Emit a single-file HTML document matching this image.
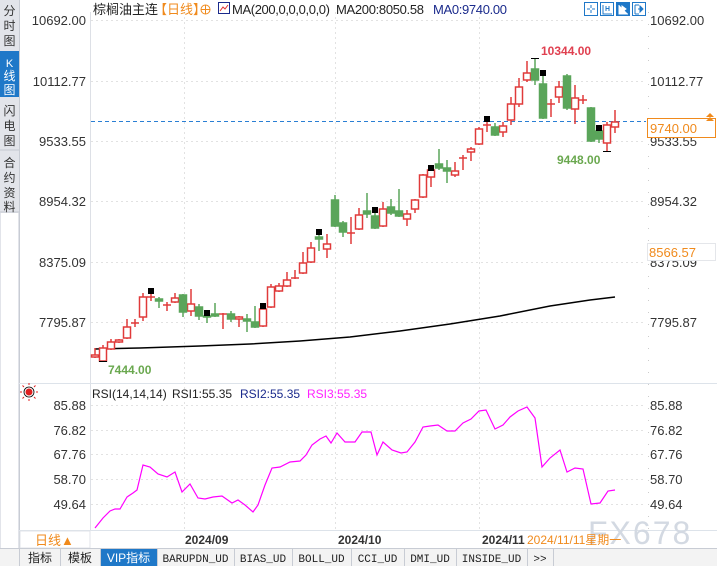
<!DOCTYPE html>
<html><head><meta charset="utf-8"><style>
html,body{margin:0;padding:0;background:#fff;}
body{width:717px;height:566px;position:relative;overflow:hidden;font-family:"Liberation Sans","Noto Sans CJK SC",sans-serif;}
svg{position:absolute;left:0;top:0;}
</style></head><body>
<svg width="717" height="566" viewBox="0 0 717 566" xmlns="http://www.w3.org/2000/svg" font-family="Liberation Sans, Noto Sans CJK SC, sans-serif">
<rect x="0" y="0" width="19" height="566" fill="#e2e4ea"/>
<rect x="19" y="0" width="1" height="548" fill="#c8ccd4"/>
<rect x="0" y="51" width="19" height="46" fill="#1f78c8"/>
<line x1="0" y1="150" x2="19" y2="150" stroke="#c4c8d0"/>
<line x1="0" y1="212" x2="19" y2="212" stroke="#c4c8d0"/>
<rect x="1" y="213" width="17" height="335" fill="#fff"/>
<g font-size="12" fill="#333" text-anchor="middle">
<text x="9.5" y="15">分</text><text x="9.5" y="30">时</text><text x="9.5" y="45">图</text>
<text x="9.5" y="67" fill="#fff" font-size="11">K</text><text x="9.5" y="80" fill="#fff">线</text><text x="9.5" y="94" fill="#fff">图</text>
<text x="9.5" y="115">闪</text><text x="9.5" y="130">电</text><text x="9.5" y="145">图</text>
<text x="9.5" y="167">合</text><text x="9.5" y="182">约</text><text x="9.5" y="197">资</text><text x="9.5" y="211">料</text>
</g>
<line x1="90.5" y1="12" x2="90.5" y2="530" stroke="#dde0e6"/>
<line x1="19" y1="383.5" x2="717" y2="383.5" stroke="#dde3ea"/>
<line x1="19" y1="530.5" x2="717" y2="530.5" stroke="#dde3ea"/>
<line x1="648.5" y1="12" x2="648.5" y2="530" stroke="#ccc" stroke-dasharray="1 11"/>
<g stroke="#e2e2e2" stroke-dasharray="2 3">
<line x1="91" y1="20.5" x2="646" y2="20.5"/><line x1="91" y1="81.5" x2="646" y2="81.5"/><line x1="91" y1="141.5" x2="646" y2="141.5"/><line x1="91" y1="201.5" x2="646" y2="201.5"/><line x1="91" y1="262.5" x2="646" y2="262.5"/><line x1="91" y1="322.5" x2="646" y2="322.5"/>
<line x1="91" y1="405.5" x2="646" y2="405.5"/><line x1="91" y1="430.5" x2="646" y2="430.5"/><line x1="91" y1="454.5" x2="646" y2="454.5"/><line x1="91" y1="479.5" x2="646" y2="479.5"/><line x1="91" y1="504.5" x2="646" y2="504.5"/>
<line x1="184.5" y1="12" x2="184.5" y2="530"/><line x1="335.5" y1="12" x2="335.5" y2="530"/><line x1="479.5" y1="12" x2="479.5" y2="530"/>
</g>
<g font-size="13" fill="#333" text-anchor="end">
<text x="86" y="25">10692.00</text><text x="86" y="86">10112.77</text><text x="86" y="146">9533.55</text><text x="86" y="206">8954.32</text><text x="86" y="267">8375.09</text><text x="86" y="327">7795.87</text>
<text x="86" y="410">85.88</text><text x="86" y="435">76.82</text><text x="86" y="459">67.76</text><text x="86" y="484">58.70</text><text x="86" y="509">49.64</text>
</g>
<g font-size="13" fill="#333">
<text x="650" y="25">10692.00</text><text x="650" y="86">10112.77</text><text x="650" y="146">9533.55</text><text x="650" y="206">8954.32</text><text x="650" y="267">8375.09</text><text x="650" y="327">7795.87</text>
<text x="650" y="410">85.88</text><text x="650" y="435">76.82</text><text x="650" y="459">67.76</text><text x="650" y="484">58.70</text><text x="650" y="509">49.64</text>
</g>
<g font-size="13">
<text x="93" y="14" fill="#222">棕榈油主连</text>
<text x="154" y="14" fill="#f08a1c">【日线】</text>
<circle cx="205.5" cy="9.5" r="4.5" fill="none" stroke="#f08a1c"/><line x1="201" y1="9.5" x2="210" y2="9.5" stroke="#f08a1c"/><line x1="205.5" y1="5" x2="205.5" y2="14" stroke="#f08a1c"/>
<rect x="218.5" y="2.5" width="11" height="11" fill="#fff" stroke="#1a2a8c"/><polyline points="220,11 223,7 225,9 228,5" fill="none" stroke="#e03030"/>
<text x="232" y="14" fill="#222" textLength="98">MA(200,0,0,0,0,0)</text>
<text x="336" y="14" fill="#222" textLength="88">MA200:8050.58</text>
<text x="433" y="14" fill="#1a2a8c" textLength="74">MA0:9740.00</text>
</g>
<g stroke="#1f78c8" fill="#fff">
<rect x="584.5" y="2.5" width="13" height="13"/><rect x="600.5" y="2.5" width="13" height="13"/><rect x="616.5" y="2.5" width="13" height="13" fill="#1f78c8"/><rect x="632.5" y="2.5" width="13" height="13"/>
<path d="M591 5v3M591 10v3M587 9h3M592 9h3" />
<path d="M603 5v9h9M606 6v5M609 6v5M606 8.5h3"/>
<path d="M619 5v9h9M622 6v6l4-3z" stroke="#fff" fill="#fff"/>
<path d="M635 5v9M635 5h4M635 14h4M638 9h3M640 6l3 3-3 3z" fill="#1f78c8"/>
</g>
<line x1="91" y1="121.5" x2="646" y2="121.5" stroke="#2a7fd4" stroke-dasharray="4 3"/>
<polyline points="95,349 140,348 200,346 250,344 300,341 350,337 400,331 450,324 500,316 550,306 590,300 615,297" fill="none" stroke="#000" stroke-width="1.5"/>
<g stroke-width="1.5">
<g stroke="#e03a3a" fill="#fff">
<line x1="95" y1="348" x2="95" y2="358"/><rect x="91.5" y="355" width="7" height="2"/>
<line x1="103" y1="345" x2="103" y2="361"/><rect x="99.5" y="348" width="7" height="13"/>
<line x1="111" y1="339" x2="111" y2="350"/><rect x="107.5" y="342" width="7" height="7"/>
<line x1="119" y1="339" x2="119" y2="343"/><rect x="115.5" y="340" width="7" height="2"/>
<line x1="127" y1="319" x2="127" y2="339"/><rect x="123.5" y="327" width="7" height="11"/>
<line x1="135" y1="319" x2="135" y2="327"/><line x1="131" y1="323" x2="139" y2="323"/>
<line x1="143" y1="293" x2="143" y2="321"/><rect x="139.5" y="297" width="7" height="20"/>
<line x1="151" y1="292" x2="151" y2="301"/><line x1="147" y1="297" x2="155" y2="297"/>
<line x1="167" y1="302" x2="167" y2="311"/><line x1="163" y1="305" x2="171" y2="305"/>
<line x1="175" y1="293" x2="175" y2="303"/><rect x="171.5" y="298" width="7" height="4"/>
<line x1="191" y1="289" x2="191" y2="316"/><rect x="187.5" y="304" width="7" height="7"/>
<line x1="223" y1="313" x2="223" y2="329"/><line x1="219" y1="314" x2="227" y2="314"/>
<line x1="239" y1="316" x2="239" y2="327"/><rect x="235.5" y="317" width="7" height="2"/>
<line x1="263" y1="305" x2="263" y2="327"/><rect x="259.5" y="309" width="7" height="17"/>
<line x1="271" y1="284" x2="271" y2="308"/><rect x="267.5" y="287" width="7" height="20"/>
<line x1="279" y1="283" x2="279" y2="292"/><rect x="275.5" y="286" width="7" height="5"/>
<line x1="287" y1="272" x2="287" y2="287"/><rect x="283.5" y="280" width="7" height="6"/>
<line x1="295" y1="270" x2="295" y2="279"/><line x1="291" y1="278" x2="299" y2="278"/>
<line x1="303" y1="252" x2="303" y2="274"/><rect x="299.5" y="263" width="7" height="10"/>
<line x1="311" y1="242" x2="311" y2="263"/><rect x="307.5" y="248" width="7" height="14"/>
<line x1="327" y1="234" x2="327" y2="258"/><rect x="323.5" y="244" width="7" height="5"/>
<line x1="351" y1="217" x2="351" y2="244"/><line x1="347" y1="233" x2="355" y2="233"/>
<line x1="359" y1="208" x2="359" y2="230"/><rect x="355.5" y="215" width="7" height="14"/>
<line x1="383" y1="202" x2="383" y2="227"/><rect x="379.5" y="209" width="7" height="17"/>
<line x1="407" y1="210" x2="407" y2="226"/><rect x="403.5" y="214" width="7" height="5"/>
<line x1="415" y1="199" x2="415" y2="213"/><rect x="411.5" y="200" width="7" height="9"/>
<line x1="423" y1="174" x2="423" y2="198"/><rect x="419.5" y="175" width="7" height="22"/>
<line x1="431" y1="169" x2="431" y2="187"/><rect x="427.5" y="170" width="7" height="7"/>
<line x1="455" y1="162" x2="455" y2="177"/><rect x="451.5" y="171" width="7" height="4"/>
<line x1="463" y1="155" x2="463" y2="170"/><line x1="459" y1="158" x2="467" y2="158"/>
<line x1="471" y1="147" x2="471" y2="161"/><rect x="467.5" y="149" width="7" height="3"/>
<line x1="479" y1="127" x2="479" y2="145"/><rect x="475.5" y="129" width="7" height="15"/>
<line x1="487" y1="118" x2="487" y2="132"/><line x1="483" y1="125" x2="491" y2="125"/>
<line x1="503" y1="122" x2="503" y2="137"/><rect x="499.5" y="126" width="7" height="6"/>
<line x1="511" y1="97" x2="511" y2="125"/><rect x="507.5" y="104" width="7" height="16"/>
<line x1="519" y1="78" x2="519" y2="107"/><rect x="515.5" y="87" width="7" height="17"/>
<line x1="527" y1="61" x2="527" y2="82"/><rect x="523.5" y="73" width="7" height="7"/>
<line x1="551" y1="99" x2="551" y2="117"/><line x1="547" y1="104" x2="555" y2="104"/>
<line x1="559" y1="81" x2="559" y2="103"/><rect x="555.5" y="87" width="7" height="10"/>
<line x1="575" y1="85" x2="575" y2="124"/><rect x="571.5" y="98" width="7" height="11"/>
<line x1="583" y1="95" x2="583" y2="104"/><line x1="579" y1="100" x2="587" y2="100"/>
<line x1="607" y1="122" x2="607" y2="151"/><rect x="603.5" y="125" width="7" height="18"/>
<line x1="615" y1="110" x2="615" y2="133"/><rect x="611.5" y="122" width="7" height="5"/>
</g>
<g stroke="#5aa55a" fill="#5aa55a">
<line x1="159" y1="297" x2="159" y2="308"/><rect x="155.5" y="299" width="7" height="2"/>
<line x1="183" y1="294" x2="183" y2="317"/><rect x="179.5" y="295" width="7" height="17"/>
<line x1="199" y1="304" x2="199" y2="320"/><rect x="195.5" y="307" width="7" height="9"/>
<line x1="207" y1="312" x2="207" y2="323"/><rect x="203.5" y="316" width="7" height="1"/>
<line x1="215" y1="303" x2="215" y2="317"/><rect x="211.5" y="314" width="7" height="2"/>
<line x1="231" y1="311" x2="231" y2="322"/><rect x="227.5" y="314" width="7" height="5"/>
<line x1="247" y1="314" x2="247" y2="332"/><rect x="243.5" y="319" width="7" height="2"/>
<line x1="255" y1="306" x2="255" y2="328"/><rect x="251.5" y="322" width="7" height="5"/>
<line x1="319" y1="233" x2="319" y2="251"/><rect x="315.5" y="237" width="7" height="2"/>
<line x1="335" y1="195" x2="335" y2="227"/><rect x="331.5" y="200" width="7" height="26"/>
<line x1="343" y1="221" x2="343" y2="237"/><rect x="339.5" y="223" width="7" height="9"/>
<line x1="367" y1="193" x2="367" y2="218"/><rect x="363.5" y="211" width="7" height="3"/>
<line x1="375" y1="212" x2="375" y2="229"/><rect x="371.5" y="216" width="7" height="12"/>
<line x1="391" y1="199" x2="391" y2="215"/><rect x="387.5" y="207" width="7" height="6"/>
<line x1="399" y1="189" x2="399" y2="217"/><rect x="395.5" y="211" width="7" height="5"/>
<line x1="439" y1="149" x2="439" y2="170"/><rect x="435.5" y="164" width="7" height="4"/>
<line x1="447" y1="160" x2="447" y2="183"/><rect x="443.5" y="168" width="7" height="3"/>
<line x1="495" y1="123" x2="495" y2="136"/><rect x="491.5" y="127" width="7" height="8"/>
<line x1="535" y1="58" x2="535" y2="85"/><rect x="531.5" y="69" width="7" height="11"/>
<line x1="543" y1="75" x2="543" y2="119"/><rect x="539.5" y="84" width="7" height="34"/>
<line x1="567" y1="74" x2="567" y2="110"/><rect x="563.5" y="76" width="7" height="32"/>
<line x1="591" y1="107" x2="591" y2="142"/><rect x="587.5" y="108" width="7" height="33"/>
<line x1="599" y1="126" x2="599" y2="143"/><rect x="595.5" y="131" width="7" height="8"/>
</g>
</g>
<g fill="#000">
<rect x="148" y="288" width="6" height="6"/><rect x="204" y="310" width="6" height="6"/><rect x="260" y="303" width="6" height="6"/><rect x="316" y="229" width="6" height="6"/><rect x="372" y="207" width="6" height="6"/><rect x="428" y="165" width="6" height="6"/><rect x="484" y="116" width="6" height="6"/><rect x="540" y="70" width="6" height="6"/><rect x="596" y="125" width="6" height="6"/>
</g>
<g stroke="#000"><line x1="531" y1="58.5" x2="539" y2="58.5"/><line x1="603" y1="151.5" x2="611" y2="151.5"/><line x1="99" y1="361.5" x2="107" y2="361.5"/></g>
<text x="541" y="55" font-size="12" font-weight="bold" fill="#e04050">10344.00</text>
<text x="557" y="164" font-size="12" font-weight="bold" fill="#6aa84f">9448.00</text>
<text x="108" y="374" font-size="12" font-weight="bold" fill="#6aa84f">7444.00</text>
<rect x="647.5" y="118.5" width="68" height="19" fill="#fff" stroke="#f08a1c"/>
<text x="650" y="133" font-size="13" fill="#f08a1c">9740.00</text>
<path d="M706 121l4-4 4 4zM706 117l4-4 4 4z" fill="#f08a1c"/>
<rect x="647.5" y="243.5" width="68" height="17" fill="#fff" stroke="#e4e6ea"/>
<text x="649" y="257" font-size="13" fill="#f08a1c">8566.57</text>
<g stroke="#e02020" stroke-width="1"><circle cx="29" cy="392" r="3" fill="#e02020"/><circle cx="29" cy="392" r="5" fill="none" stroke="#000" stroke-width="0.8"/>
<path d="M29 385v-2M29 399v2M22 392h-2M36 392h2M24 387l-1.5-1.5M34 397l1.5 1.5M34 387l1.5-1.5M24 397l-1.5 1.5"/></g>
<g font-size="12">
<text x="92" y="398" fill="#222">RSI(14,14,14)</text>
<text x="172" y="398" fill="#222">RSI1:55.35</text>
<text x="240" y="398" fill="#1a2a8c">RSI2:55.35</text>
<text x="307" y="398" fill="#ff22ff">RSI3:55.35</text>
</g>
<polyline fill="none" stroke="#ff00ff" stroke-width="1.2" points="95,528 103,518 110,511 115,509 120,509 127,497 133,493 137,490 143,465 150,467 158,474 167,477 175,472 182,492 190,484 198,498 205,499 213,497 222,496 232,503 238,500 245,505 253,512 258,505 265,485 272,468 280,467 290,462 300,461 306,455 312,445 320,439 326,436 331,443 337,433 345,442 355,442 362,432 371,432 377,455 383,442 392,450 401,453 407,452 415,442 423,427 430,426 438,425 447,431 455,431 463,423 471,419 479,411 486,410 495,429 503,425 510,417 518,411 527,407 535,418 542,467 550,458 560,450 567,472 575,468 583,469 591,504 600,503 608,491 615,490"/>
<rect x="20" y="531" width="70" height="17" fill="#fff" stroke="#e0e3e8"/>
<text x="35" y="545" font-size="13" fill="#f08a1c">日线▲</text>
<g font-size="12" font-weight="bold" fill="#333">
<text x="185" y="544">2024/09</text><text x="338" y="544">2024/10</text><text x="482" y="544">2024/11</text>
</g>
<text x="588" y="544" font-size="32" fill="#d3d9e2" letter-spacing="2">FX678</text>
<text x="527" y="544" font-size="12" fill="#f08a1c">2024/11/11星期一</text>
<rect x="0" y="548" width="717" height="18" fill="#f3f3f3"/>
<line x1="0" y1="548.5" x2="717" y2="548.5" stroke="#c8ccd4"/>
<rect x="100" y="549" width="57" height="17" fill="#1f78c8"/>
<g stroke="#c8ccd4"><line x1="19.5" y1="549" x2="19.5" y2="566"/><line x1="60.5" y1="549" x2="60.5" y2="566"/><line x1="100.5" y1="549" x2="100.5" y2="566"/><line x1="157.5" y1="549" x2="157.5" y2="566"/><line x1="234.5" y1="549" x2="234.5" y2="566"/><line x1="292.5" y1="549" x2="292.5" y2="566"/><line x1="351.5" y1="549" x2="351.5" y2="566"/><line x1="404.5" y1="549" x2="404.5" y2="566"/><line x1="456.5" y1="549" x2="456.5" y2="566"/><line x1="527.5" y1="549" x2="527.5" y2="566"/><line x1="553.5" y1="549" x2="553.5" y2="566"/></g>
<g font-size="12" fill="#222" text-anchor="middle" font-family="Liberation Mono, Noto Sans CJK SC, monospace">
<text x="40" y="562" font-family="Liberation Sans, Noto Sans CJK SC, sans-serif">指标</text>
<text x="80" y="562" font-family="Liberation Sans, Noto Sans CJK SC, sans-serif">模板</text>
<text x="128.5" y="562" fill="#fff" font-family="Liberation Sans, Noto Sans CJK SC, sans-serif">VIP指标</text>
<text x="195.5" y="562" font-size="11">BARUPDN_UD</text>
<text x="263" y="562" font-size="11">BIAS_UD</text>
<text x="321.5" y="562" font-size="11">BOLL_UD</text>
<text x="377.5" y="562" font-size="11">CCI_UD</text>
<text x="430" y="562" font-size="11">DMI_UD</text>
<text x="491.5" y="562" font-size="11">INSIDE_UD</text>
<text x="540" y="562" font-size="11">&gt;&gt;</text>
</g>
</svg>
</body></html>
